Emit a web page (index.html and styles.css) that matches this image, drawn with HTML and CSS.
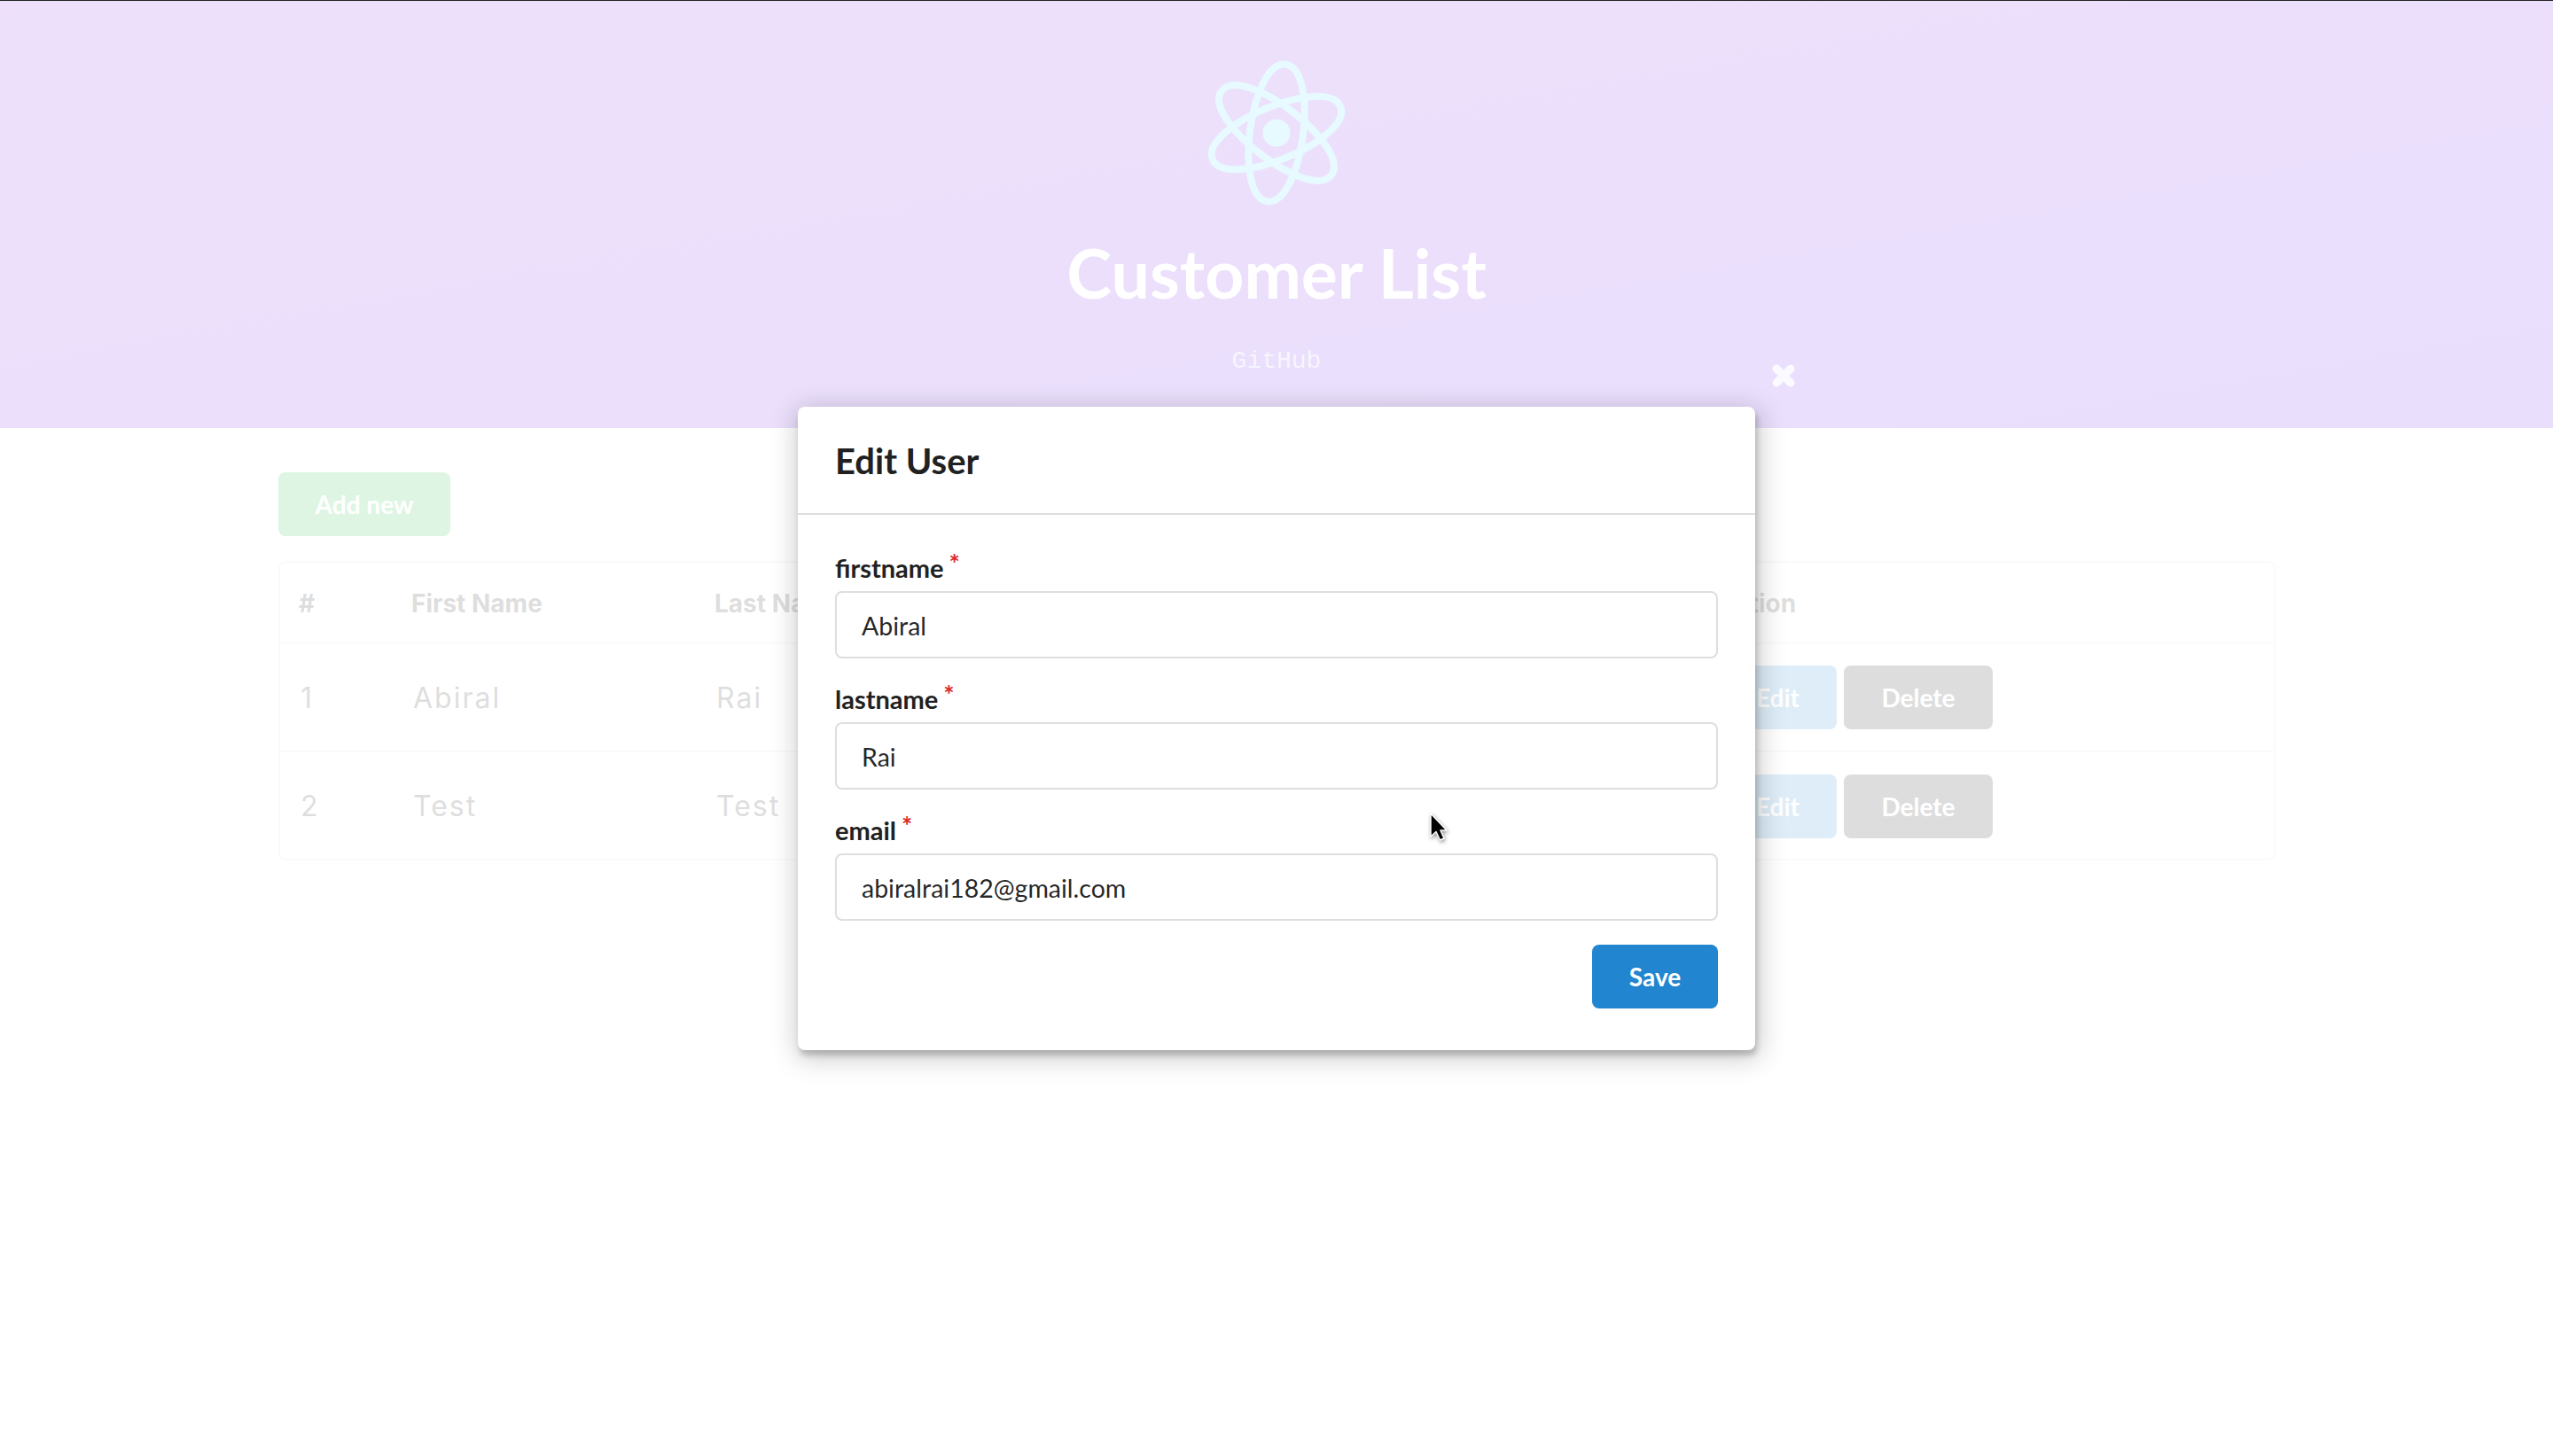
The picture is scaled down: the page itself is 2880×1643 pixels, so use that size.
FILE: index.html
```html
<!DOCTYPE html>
<html lang="en">
<head>
  <meta charset="UTF-8">
  <title>Customer List</title>
  <link rel="stylesheet" href="styles.css">
</head>
<body>
  <header class="banner">
    <svg class="logo" viewBox="-85 -85 170 170" width="170" height="170" aria-hidden="true">
      <circle r="15.5" fill="#61dafb"/>
      <g fill="none" stroke="#61dafb" stroke-width="8">
        <path d="M78 0C78 20 38 30 0 30C-38 30-78 20-78 0C-78-20-38-30 0-30C38-30 78-20 78 0Z" transform="rotate(-82.4)"/>
        <path d="M78 0C78 20 38 30 0 30C-38 30-78 20-78 0C-78-20-38-30 0-30C38-30 78-20 78 0Z" transform="rotate(-22.4)"/>
        <path d="M78 0C78 20 38 30 0 30C-38 30-78 20-78 0C-78-20-38-30 0-30C38-30 78-20 78 0Z" transform="rotate(37.6)"/>
      </g>
    </svg>
    <h1 class="banner-title">Customer List</h1>
    <a class="banner-link">GitHub</a>
  </header>

  <main class="content">
    <button class="btn btn-green">Add new</button>
    <table class="customers">
      <colgroup>
        <col class="col-id"><col class="col-first"><col class="col-last"><col class="col-email"><col>
      </colgroup>
      <thead>
        <tr><th>#</th><th>First Name</th><th>Last Name</th><th>Email</th><th>Action</th></tr>
      </thead>
      <tbody>
        <tr>
          <td>1</td><td>Abiral</td><td>Rai</td><td>abiralrai182@gmail.com</td>
          <td class="actions"><button class="btn btn-blue">Edit</button><button class="btn btn-black">Delete</button></td>
        </tr>
        <tr>
          <td>2</td><td>Test</td><td>Test</td><td>test@test.com</td>
          <td class="actions"><button class="btn btn-blue">Edit</button><button class="btn btn-black">Delete</button></td>
        </tr>
      </tbody>
    </table>
  </main>

  <div class="dimmer">
    <svg class="close-icon" viewBox="0 0 30 30" width="30" height="30" aria-hidden="true">
      <path d="M7 7 23 23M23 7 7 23" stroke="#fff" stroke-width="9" stroke-linecap="round" fill="none"/>
    </svg>
    <div class="modal">
      <div class="modal-header">Edit User</div>
      <form class="modal-body">
        <div class="field">
          <label class="field-label">firstname</label>
          <input class="field-input" type="text" value="Abiral">
        </div>
        <div class="field">
          <label class="field-label">lastname</label>
          <input class="field-input" type="text" value="Rai">
        </div>
        <div class="field">
          <label class="field-label">email</label>
          <input class="field-input" type="text" value="abiralrai182@gmail.com">
        </div>
        <div class="modal-actions">
          <button type="button" class="btn btn-save">Save</button>
        </div>
      </form>
    </div>
    <svg class="cursor" viewBox="0 0 24 36" width="24" height="36" aria-hidden="true">
      <path d="M3 3V29L9 23.5L13.5 33L18 31L14 22H21Z" fill="#000" stroke="#fff" stroke-width="1.5" stroke-linejoin="round"/>
    </svg>
  </div>
</body>
</html>
```

FILE: styles.css
```css
html, body {
  height: 100%;
}
body {
  margin: 0;
  border-top: 1px solid #222;
  box-sizing: border-box;
  background: #fff;
  font-family: Lato, "Noto Sans", sans-serif;
  color: #212121;
  overflow: hidden;
}

/* banner */
.banner {
  height: 482px;
  background: linear-gradient(170deg, #8a30dc 0%, #6c2af2 100%);
  display: flex;
  flex-direction: column;
  align-items: center;
}
.logo {
  margin-top: 64px;
}
.banner-title {
  margin: 27px 0 0;
  font-size: 77px;
  line-height: 91px;
  font-weight: 700;
  color: #fff;
}
.banner-link {
  margin-top: 39px;
  font-family: "Liberation Mono", monospace;
  font-size: 28px;
  line-height: 32px;
  color: #c9b8f5;
}

/* page content */
.content {
  padding: 50px 313px 0 314px;
}
.btn {
  height: 72px;
  padding: 0;
  border: none;
  border-radius: 8px;
  font-family: Lato, sans-serif;
  font-size: 28px;
  font-weight: 700;
  color: #fff;
}
.btn-green { background: #21ba45; width: 194px; }
.btn-blue { background: #2185d0; width: 133px; margin-right: 8px; }
.btn-black { background: #1b1c1d; width: 168px; }
.btn-save { background: #2185d0; width: 142px; }

.customers {
  margin-top: 28px;
  width: 100%;
  table-layout: fixed;
  border-collapse: separate;
  border-spacing: 0;
  border: 2px solid rgba(34, 36, 38, 0.15);
  border-radius: 8px;
  font-family: Inter, sans-serif;
}
.col-id { width: 127px; }
.col-first { width: 342px; }
.col-last { width: 342px; }
.col-email { width: 789px; }
.customers th {
  height: 88px;
  padding: 2px 21px 0;
  text-align: left;
  font-size: 28px;
  font-weight: 700;
  border-bottom: 2px solid rgba(34, 36, 38, 0.15);
}
.customers td {
  height: 120px;
  padding: 0 23px;
  font-size: 32px;
  letter-spacing: 2px;
  border-bottom: 2px solid rgba(34, 36, 38, 0.15);
}
.customers tbody tr:last-child td {
  height: 119px;
  padding-top: 1px;
  border-bottom: none;
}

/* modal */
.dimmer {
  position: absolute;
  top: 1px;
  left: 0;
  right: 0;
  bottom: 0;
  background: rgba(255, 255, 255, 0.85);
  display: flex;
  justify-content: center;
  align-items: flex-start;
  padding-top: 458px;
  box-sizing: border-box;
}
.close-icon {
  position: absolute;
  left: 1997px;
  top: 408px;
  opacity: 0.85;
}
.modal {
  width: 1080px;
  height: 726px;
  background: #fff;
  border-radius: 8px;
  box-shadow: 2px 6px 6px 0 rgba(0, 0, 0, 0.2), 2px 6px 30px 4px rgba(0, 0, 0, 0.2);
}
.modal-header {
  height: 119px;
  padding: 1px 42px 0;
  display: flex;
  align-items: center;
  font-size: 40px;
  font-weight: 700;
  border-bottom: 2px solid rgba(34, 36, 38, 0.15);
}
.modal-body {
  padding: 41px 42px 0;
}
.field {
  margin-bottom: 27px;
}
.field-label {
  display: block;
  margin-bottom: 8px;
  font-size: 29px;
  line-height: 37px;
  font-weight: 700;
}
.field-label::after {
  content: "*";
  display: inline-block;
  vertical-align: top;
  margin: -6px 0 0 6px;
  color: #db2828;
}
.field-input {
  display: block;
  width: 100%;
  height: 76px;
  box-sizing: border-box;
  padding: 2px 28px 0;
  border: 2px solid rgba(34, 36, 38, 0.15);
  border-radius: 8px;
  font-family: Lato, sans-serif;
  font-size: 28.5px;
  color: rgba(0, 0, 0, 0.87);
  outline: none;
}
.modal-actions {
  display: flex;
  justify-content: flex-end;
  margin-top: 1px;
}
.cursor {
  position: absolute;
  left: 1611px;
  top: 914px;
  filter: drop-shadow(1px 2px 2px rgba(0, 0, 0, 0.4));
}
```
